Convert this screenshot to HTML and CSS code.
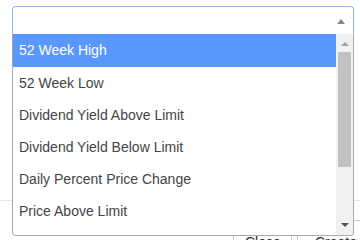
FILE: index.html
```html
<!DOCTYPE html>
<html>
<head>
<meta charset="utf-8">
<link rel="stylesheet" href="styles.css">
</head>
<body>
<div class="page">
  <div class="field">
    <div class="select">
      <span class="arrow"></span>
    </div>
  </div>
  <div class="footer">
    <button class="btn">Close</button>
    <button class="btn">Create</button>
  </div>
  <div class="dropdown">
    <ul class="options">
      <li class="opt active">52 Week High</li>
      <li class="opt">52 Week Low</li>
      <li class="opt">Dividend Yield Above Limit</li>
      <li class="opt">Dividend Yield Below Limit</li>
      <li class="opt">Daily Percent Price Change</li>
      <li class="opt">Price Above Limit</li>
    </ul>
    <div class="scrollbar">
      <span class="sb-up"></span>
      <div class="sb-track"><div class="sb-thumb"></div></div>
      <span class="sb-down"></span>
    </div>
  </div>
</div>
</body>
</html>
```
FILE: styles.css
```css
html, body {
  margin: 0;
  padding: 0;
  background: #fff;
}
body {
  width: 360px;
  height: 240px;
  overflow: hidden;
  font-family: "Liberation Sans", Arial, sans-serif;
  font-size: 14px;
  color: #333;
}
.page {
  position: relative;
  width: 360px;
  height: 240px;
  overflow: hidden;
}
.field {
  padding: 6px 6px 0 12px;
}
.select {
  box-sizing: border-box;
  height: 29px;
  border: 1px solid #8fb6f3;
  border-bottom: none;
  border-radius: 4px 4px 0 0;
  display: flex;
  justify-content: flex-end;
  align-items: center;
  padding-right: 8px;
}
.arrow {
  width: 0;
  height: 0;
  border-left: 4px solid transparent;
  border-right: 4px solid transparent;
  border-bottom: 5px solid #888;
  margin-top: 1px;
}
.footer {
  margin-top: 165px;
  border-top: 1px solid #e5e5e5;
  padding: 19px 0 0 233px;
  display: flex;
  gap: 5px;
  width: 400px;
}
.btn {
  font-family: "Liberation Sans", Arial, sans-serif;
  font-size: 14px;
  color: #333;
  background: #fff;
  border: 1px solid #ccc;
  border-radius: 4px;
  height: 34px;
  padding: 9px 12px 0;
  box-sizing: border-box;
  line-height: 20px;
  flex: none;
  text-align: left;
}
.btn:first-child {
  width: 59px;
  padding-left: 11px;
}
.btn:last-child {
  width: 70px;
  padding-left: 17px;
}
.dropdown {
  position: absolute;
  top: 34px;
  left: 12px;
  width: 342px;
  height: 202px;
  box-sizing: border-box;
  border: 1px solid #aaa;
  border-top: none;
  border-radius: 0 0 4px 4px;
  background: #fff;
  display: flex;
  overflow: hidden;
}
.options {
  list-style: none;
  margin: 0;
  padding: 0;
  flex: 1;
  overflow: hidden;
}
.opt {
  height: 32px;
  line-height: 32px;
  padding-left: 6px;
  color: #444;
  white-space: nowrap;
}
.opt.active {
  background: #5897fb;
  color: #fff;
  height: 33px;
  line-height: 33px;
}
.scrollbar {
  width: 17px;
  flex: none;
  background: #f1f1f1;
  display: flex;
  flex-direction: column;
  align-items: center;
}
.sb-up {
  margin-top: 8px;
  width: 0;
  height: 0;
  border-left: 4px solid transparent;
  border-right: 4px solid transparent;
  border-bottom: 4px solid #a3a3a3;
}
.sb-track {
  flex: 1;
  width: 100%;
  padding-top: 6px;
  box-sizing: border-box;
}
.sb-thumb {
  margin: 0 auto;
  width: 13px;
  height: 115px;
  background: #c1c1c1;
}
.sb-down {
  margin-bottom: 8px;
  width: 0;
  height: 0;
  border-left: 4px solid transparent;
  border-right: 4px solid transparent;
  border-top: 4px solid #505050;
}
```
